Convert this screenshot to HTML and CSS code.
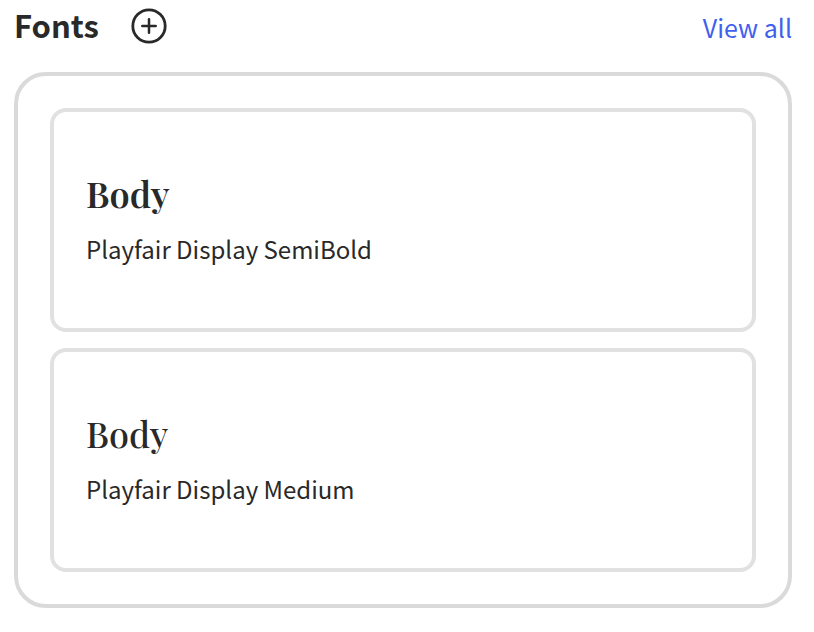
FILE: index.html
```html
<!DOCTYPE html>
<html lang="en">
<head>
    <meta charset="UTF-8">
    <meta name="viewport" content="width=device-width, initial-scale=1.0">
    <title>Fonts</title>
    <link rel="stylesheet" href="styles.css">
</head>
<body>

<section class="fonts">
    <header class="fonts-header">
        <h2 class="fonts-title">Fonts</h2>
        <button class="add-button" type="button" aria-label="Add font">
            <svg width="36" height="36" viewBox="0 0 36 36" fill="none" stroke="#292929" stroke-linecap="round">
                <circle cx="18" cy="18" r="16.2" stroke-width="2.8"/>
                <path d="M18 11.3v13.4M11.3 18h13.4" stroke-width="2.5"/>
            </svg>
        </button>
        <a class="view-all" href="#">View all</a>
    </header>
    <div class="font-list">
        <article class="font-card">
            <h3 class="font-sample semibold">Body</h3>
            <p class="font-name">Playfair Display SemiBold</p>
        </article>
        <article class="font-card">
            <h3 class="font-sample">Body</h3>
            <p class="font-name">Playfair Display Medium</p>
        </article>
    </div>
</section>

</body>
</html>
```
FILE: styles.css
```css
* {
    box-sizing: border-box;
}
body {
    margin: 0;
    background: #fff;
    color: #292929;
    font-family: 'Noto Sans CJK SC', 'Noto Sans', sans-serif;
}
.fonts {
    padding: 8px 22px 24px 14px;
}
.fonts-header {
    display: flex;
    align-items: flex-start;
    margin-bottom: 26px;
}
.fonts-title {
    margin: 0;
    font-size: 31px;
    line-height: 34px;
    font-weight: 700;
}
.add-button {
    display: flex;
    margin-left: 32px;
    padding: 0;
    border: none;
    background: none;
    cursor: pointer;
}
.view-all {
    margin-left: auto;
    font-size: 25px;
    line-height: 38px;
    color: #4260ee;
    text-decoration: none;
}
.font-list {
    display: flex;
    flex-direction: column;
    gap: 16px;
    padding: 32px;
    border: 4px solid #dadada;
    border-radius: 32px;
}
.font-card {
    padding: 57px 32px 59px;
    border: 4px solid #e1e1e1;
    border-radius: 16px;
}
.font-sample {
    margin: 0 0 12px;
    font-family: 'Playfair Display', 'Liberation Serif', serif;
    font-size: 36px;
    line-height: 48px;
    font-weight: 500;
}
.semibold {
    font-weight: 600;
}
.font-name {
    margin: 0;
    font-size: 24px;
    line-height: 40px;
}
```
